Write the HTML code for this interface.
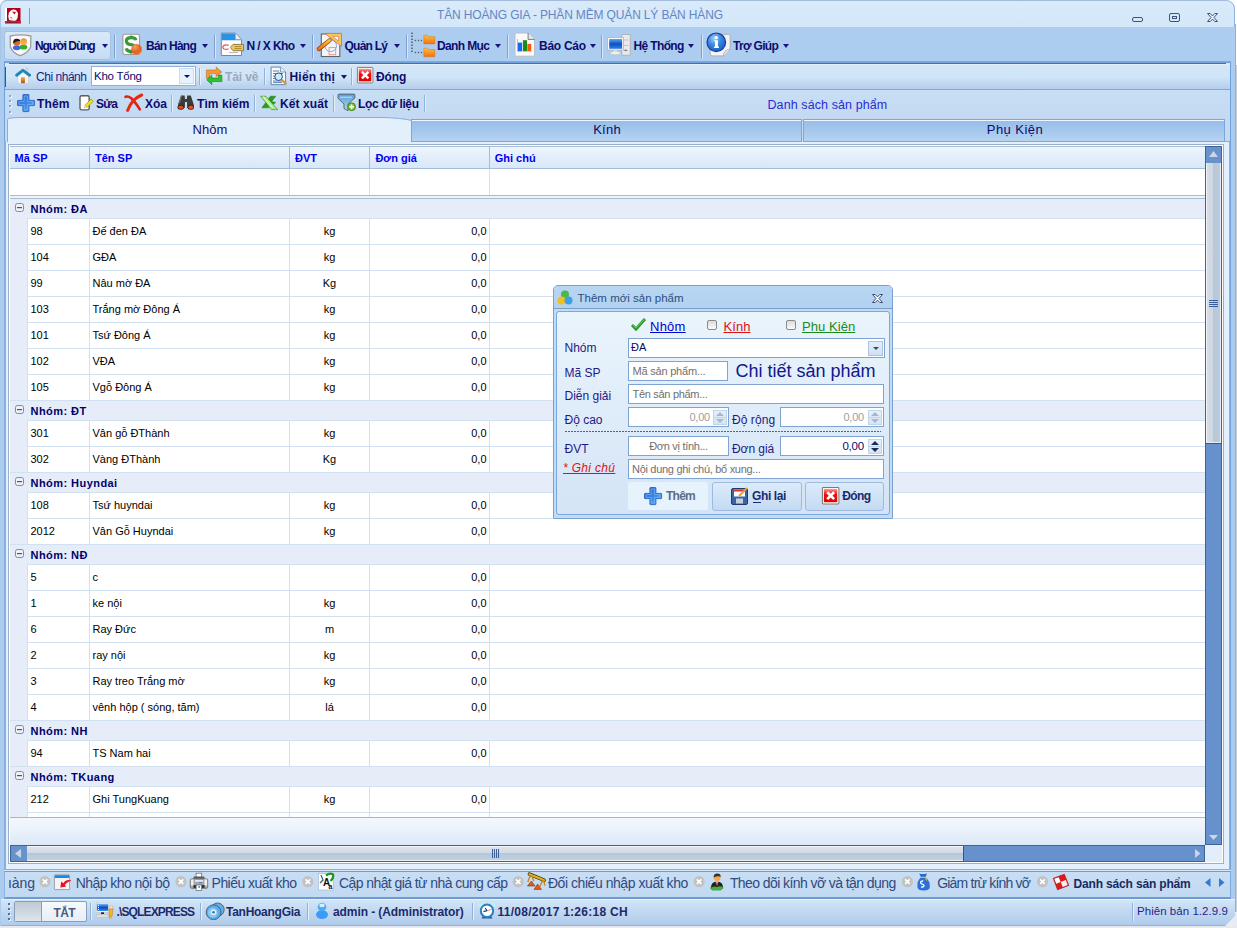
<!DOCTYPE html>
<html><head><meta charset="utf-8">
<style>
*{margin:0;padding:0;box-sizing:border-box}
html,body{width:1237px;height:928px;overflow:hidden;background:#fff;font-family:"Liberation Sans",sans-serif;position:relative}
.a{position:absolute}
.t{position:absolute;white-space:nowrap;line-height:1}
svg{overflow:visible}
.h{-webkit-text-stroke:0.2px currentColor}
</style></head><body>

<div class="a" style="left:0px;top:0px;width:1237px;height:928px;background:#ffffff"></div>
<div class="a" style="left:0px;top:0px;width:1235px;height:926px;background:#abcbef;border-radius:7px 9px 0 0"></div>
<div class="a" style="left:0px;top:0px;width:1235px;height:27px;background:linear-gradient(#d9ebfa,#d4e7f8);border-top:1px solid #a3bcdc;border-left:1px solid #a9c4e4;border-right:1px solid #92b4de;border-radius:7px 9px 0 0"></div>
<svg class="a" style="left:5px;top:8px" width="16" height="16" viewBox="0 0 16 16"><rect x="0" y="0" width="2" height="13" fill="#ffffff"/><rect x="2" y="0" width="13.5" height="13.5" fill="#b0001c"/><path d="M4 12 Q2.5 8 4 4.5 Q6 1.2 9 1.5 Q12.5 2 13 6 Q13.2 10 11 12.5 Q8 13 4 12Z" fill="#ffffff"/><path d="M7 3.5 L11 4 L9.5 6.5 Z" fill="#c01020"/><path d="M5.5 9 L7 10.5" stroke="#c01020" stroke-width="1"/><rect x="0" y="13" width="16" height="2.6" fill="#b8283a"/><rect x="2" y="14" width="11" height="0.8" fill="#7a2030"/></svg>
<div class="a" style="left:29px;top:8px;width:1px;height:16px;background:#7b9fcf"></div>
<div class="t" style="left:437px;top:9.34px;font-size:12px;color:#6585c4;letter-spacing:-0.151px;">TÂN HOÀNG GIA - PHẦN MỀM QUẢN LÝ BÁN HÀNG</div>
<div class="a" style="left:1132px;top:17px;width:11px;height:5px;border:1.5px solid #3d5183;border-radius:2px"></div>
<div class="a" style="left:1169px;top:13px;width:11px;height:9px;border:1.5px solid #3d5183;border-radius:2px"></div>
<div class="a" style="left:1172px;top:16px;width:5px;height:3px;border:1.2px solid #3d5183"></div>
<svg class="a" style="left:1207px;top:13px" width="11" height="9" viewBox="0 0 11 9"><path d="M0.5 0.5 H3.2 L5.5 2.9 L7.8 0.5 H10.5 L7 4.5 L10.5 8.5 H7.8 L5.5 6.1 L3.2 8.5 H0.5 L4 4.5 Z" fill="#e8f2fb" stroke="#3d5183" stroke-width="1" stroke-linejoin="round"/></svg>
<div class="a" style="left:0px;top:27px;width:1235px;height:35px;background:#adcdf0;border-left:1px solid #a9c4e4"></div>
<div class="a" style="left:4px;top:31px;width:107px;height:29px;background:linear-gradient(#d9e9f9,#c6dcf4);border:1px solid #a4c1e3;border-radius:3px"></div>
<svg width="0" height="0" style="position:absolute"><defs><linearGradient id="gOr" x1="0" y1="0" x2="0" y2="1"><stop offset="0" stop-color="#ffc040"/><stop offset="1" stop-color="#f07010"/></linearGradient><radialGradient id="gBall" cx="0.35" cy="0.3" r="0.8"><stop offset="0" stop-color="#f8a060"/><stop offset="0.6" stop-color="#e06020"/><stop offset="1" stop-color="#f08030"/></radialGradient><linearGradient id="gRed" x1="0" y1="0" x2="0" y2="1"><stop offset="0" stop-color="#ff9898"/><stop offset="0.4" stop-color="#f01010"/><stop offset="1" stop-color="#e00000"/></linearGradient><linearGradient id="gScr" x1="0" y1="0" x2="0" y2="1"><stop offset="0" stop-color="#60a8f0"/><stop offset="0.5" stop-color="#0850c8"/><stop offset="1" stop-color="#3080e0"/></linearGradient><radialGradient id="gInfo" cx="0.4" cy="0.3" r="0.7"><stop offset="0" stop-color="#a8d0f8"/><stop offset="0.5" stop-color="#3a88e0"/><stop offset="1" stop-color="#1a60c0"/></radialGradient><linearGradient id="gPlus" x1="0" y1="0" x2="1" y2="1"><stop offset="0" stop-color="#2a5ed0"/><stop offset="1" stop-color="#4ab0f8"/></linearGradient><linearGradient id="gFun" x1="0" y1="0" x2="0" y2="1"><stop offset="0" stop-color="#5aa0d8"/><stop offset="1" stop-color="#a8d8f8"/></linearGradient><radialGradient id="gGreen" cx="0.5" cy="0.5" r="0.5"><stop offset="0" stop-color="#c8f080"/><stop offset="1" stop-color="#50a010"/></radialGradient><linearGradient id="gDoor" x1="0" y1="0" x2="0" y2="1"><stop offset="0" stop-color="#f0b040"/><stop offset="1" stop-color="#b05010"/></linearGradient></defs></svg>
<svg class="a" style="left:6px;top:30px" width="30" height="30" viewBox="0 0 30 30"><path d="M4.2 6 Q14.5 3.8 24.9 6 L24.6 17 Q22 23 14.2 25.6 Q6.5 23 4.4 17 Z" fill="#fafafa" stroke="#9c9c9c" stroke-width="1.3"/><ellipse cx="10.8" cy="17.8" rx="3.9" ry="2.4" fill="#3a66f0"/><circle cx="10.7" cy="12.6" r="3.4" fill="#e06820"/><path d="M7.2 13.5 Q6.8 8.6 10.8 8.8 Q14 8.8 14.2 11.2 Q11 10 7.2 13.5Z" fill="#1a1a1a"/><ellipse cx="17.5" cy="17.2" rx="3.8" ry="2.4" fill="#30b030"/><circle cx="17.6" cy="11.8" r="3.4" fill="#f8a848"/><path d="M14.4 11 Q15 8 17.6 8.2 Q20.4 8.2 20.8 11 Q18 9.6 14.4 11Z" fill="#d0a050"/></svg>
<div class="t" style="left:35px;top:39.64px;font-size:12px;color:#0e0c6e;font-weight:bold;letter-spacing:-1.094px;">Người Dùng</div>
<div class="a" style="left:102px;top:44px;width:0;height:0;border-left:3.5px solid transparent;border-right:3.5px solid transparent;border-top:4px solid #18167e"></div>
<div class="a" style="left:114px;top:35px;width:1px;height:23px;background:#7f9fcc"></div>
<div class="a" style="left:115px;top:35px;width:1px;height:23px;background:#d8e8f8"></div>
<svg class="a" style="left:118px;top:30px" width="30" height="30" viewBox="0 0 30 30"><rect x="4.9" y="4.3" width="16.6" height="20.2" rx="1.8" fill="#fdfdfd" stroke="#9c9c9c" stroke-width="1.1"/><path d="M17.8 10.2 Q17.5 7.6 13.2 7.6 Q8.4 7.7 8.4 11 Q8.4 14.2 13 14.6 Q17.6 15.2 17.4 18.4 Q17 21.6 13 21.6 Q8.8 21.4 8.2 18.4" fill="none" stroke="#3a9a3a" stroke-width="3.2"/><rect x="12" y="5.6" width="2.4" height="2.5" fill="#3a9a3a"/><rect x="12" y="21" width="2.4" height="2.5" fill="#2a8a2a"/><circle cx="18.6" cy="19.4" r="5.4" fill="url(#gBall)"/></svg>
<div class="t" style="left:146px;top:39.64px;font-size:12px;color:#0e0c6e;font-weight:bold;letter-spacing:-0.745px;">Bán Hàng</div>
<div class="a" style="left:202px;top:44px;width:0;height:0;border-left:3.5px solid transparent;border-right:3.5px solid transparent;border-top:4px solid #18167e"></div>
<div class="a" style="left:214px;top:35px;width:1px;height:23px;background:#7f9fcc"></div>
<div class="a" style="left:215px;top:35px;width:1px;height:23px;background:#d8e8f8"></div>
<svg class="a" style="left:216px;top:30px" width="30" height="30" viewBox="0 0 30 30"><path d="M5.3 3.1 H19.4 L25.5 9.4 V25.5 H5.3 Z" fill="#fdfdfd" stroke="#7a8898" stroke-width="1"/><path d="M5.8 3.6 H19.2 L24.8 9.6 V10.2 H5.8 Z" fill="#2a90e8"/><path d="M19.4 3.1 V9.4 H25.5 Z" fill="#f0f0f0" stroke="#8a98a8" stroke-width="0.6"/><path d="M12.6 15.4 Q10 14.4 7.6 15.6 Q5.8 17.4 8 19 Q10.4 19.8 12.6 18.8" fill="none" stroke="#f05050" stroke-width="1.2"/><rect x="13" y="22" width="9" height="1" fill="#b8b8b8"/><path d="M14.5 17.5 L17 14.4 H27.5 V20.7 H17 Z" fill="#f0cc60" stroke="#8a7030" stroke-width="0.9"/><rect x="18.5" y="16.2" width="7" height="0.9" fill="#a08030"/><rect x="18.5" y="18.2" width="7" height="0.9" fill="#a08030"/></svg>
<div class="t" style="left:246.5px;top:39.64px;font-size:12px;color:#0e0c6e;font-weight:bold;letter-spacing:-0.605px;">N / X Kho</div>
<div class="a" style="left:300px;top:44px;width:0;height:0;border-left:3.5px solid transparent;border-right:3.5px solid transparent;border-top:4px solid #18167e"></div>
<div class="a" style="left:312px;top:35px;width:1px;height:23px;background:#7f9fcc"></div>
<div class="a" style="left:313px;top:35px;width:1px;height:23px;background:#d8e8f8"></div>
<svg class="a" style="left:316px;top:30px" width="30" height="30" viewBox="0 0 30 30"><rect x="5.3" y="4" width="18.5" height="22.5" fill="#f6f6f8" stroke="#606468" stroke-width="1.1"/><circle cx="14.7" cy="15.8" r="5.8" fill="none" stroke="#6aa0f0" stroke-width="0.9"/><rect x="13.1" y="17.6" width="6.6" height="7.1" fill="none" stroke="#e09090" stroke-width="0.9"/><path d="M8.9 3.4 H25.5 V16.5 Z" fill="#f8c858" stroke="#d07850" stroke-width="0.9"/><path d="M16.5 6.3 H22.6 V11.3 Z" fill="#f8f8f8" stroke="#d07850" stroke-width="0.7"/><path d="M2.8 19 L13.6 10.3" stroke="#a04010" stroke-width="4.2" stroke-linecap="round"/><path d="M2.8 19 L13.6 10.3" stroke="url(#gOr)" stroke-width="2.8" stroke-linecap="round"/></svg>
<div class="t" style="left:344.5px;top:39.64px;font-size:12px;color:#0e0c6e;font-weight:bold;letter-spacing:-0.753px;">Quản Lý</div>
<div class="a" style="left:394px;top:44px;width:0;height:0;border-left:3.5px solid transparent;border-right:3.5px solid transparent;border-top:4px solid #18167e"></div>
<div class="a" style="left:406px;top:35px;width:1px;height:23px;background:#7f9fcc"></div>
<div class="a" style="left:407px;top:35px;width:1px;height:23px;background:#d8e8f8"></div>
<svg class="a" style="left:408px;top:30px" width="30" height="30" viewBox="0 0 30 30"><rect x="3.2" y="2.6" width="1.6" height="1.4" fill="#5a5a5a"/><rect x="3.2" y="5.6" width="1.6" height="1.4" fill="#5a5a5a"/><rect x="3.2" y="8.6" width="1.6" height="1.4" fill="#5a5a5a"/><rect x="3.2" y="11.6" width="1.6" height="1.4" fill="#5a5a5a"/><rect x="3.2" y="14.6" width="1.6" height="1.4" fill="#5a5a5a"/><rect x="3.2" y="17.6" width="1.6" height="1.4" fill="#5a5a5a"/><rect x="3.2" y="20.6" width="1.6" height="1.4" fill="#5a5a5a"/><rect x="6.8" y="9.8" width="1.3" height="1.4" fill="#5a5a5a"/><rect x="6.8" y="21.8" width="1.3" height="1.4" fill="#5a5a5a"/><rect x="9.8" y="9.8" width="1.3" height="1.4" fill="#5a5a5a"/><rect x="9.8" y="21.8" width="1.3" height="1.4" fill="#5a5a5a"/><rect x="12.8" y="9.8" width="1.3" height="1.4" fill="#5a5a5a"/><rect x="12.8" y="21.8" width="1.3" height="1.4" fill="#5a5a5a"/><path d="M15.8 5.6 Q15.8 5.2 16.3 5.2 H19.6 L20.8 6.7 H26.8 V13.9 H15.8 Z" fill="url(#gOr)" stroke="#e07010" stroke-width="0.5"/><path d="M15.8 18.6 Q15.8 18.2 16.3 18.2 H19.6 L20.8 19.6 H26.8 V26.8 H15.8 Z" fill="url(#gOr)" stroke="#e07010" stroke-width="0.5"/></svg>
<div class="t" style="left:437px;top:39.64px;font-size:12px;color:#0e0c6e;font-weight:bold;letter-spacing:-0.621px;">Danh Mục</div>
<div class="a" style="left:495px;top:44px;width:0;height:0;border-left:3.5px solid transparent;border-right:3.5px solid transparent;border-top:4px solid #18167e"></div>
<div class="a" style="left:507px;top:35px;width:1px;height:23px;background:#7f9fcc"></div>
<div class="a" style="left:508px;top:35px;width:1px;height:23px;background:#d8e8f8"></div>
<svg class="a" style="left:510px;top:30px" width="30" height="30" viewBox="0 0 30 30"><path d="M5 3 H18.1 L24.6 9.4 V26.2 H5 Z" fill="#fafafa" stroke="#b8bcc0" stroke-width="1"/><path d="M18.1 3 V9.4 H24.6" fill="#e8e8e8" stroke="#5a6068" stroke-width="0.8"/><rect x="7.2" y="9" width="0.6" height="12.7" fill="#999"/><rect x="7.2" y="21.4" width="14.8" height="0.6" fill="#bbb"/><rect x="7.9" y="12.6" width="4.2" height="8.5" fill="#1a66f0"/><rect x="12.9" y="10.2" width="4.1" height="10.9" fill="#1a8a1a"/><rect x="17.3" y="13.9" width="3.9" height="7.2" fill="#f85a10"/></svg>
<div class="t" style="left:539px;top:39.64px;font-size:12px;color:#0e0c6e;font-weight:bold;letter-spacing:-0.281px;">Báo Cáo</div>
<div class="a" style="left:590px;top:44px;width:0;height:0;border-left:3.5px solid transparent;border-right:3.5px solid transparent;border-top:4px solid #18167e"></div>
<div class="a" style="left:601px;top:35px;width:1px;height:23px;background:#7f9fcc"></div>
<div class="a" style="left:602px;top:35px;width:1px;height:23px;background:#d8e8f8"></div>
<svg class="a" style="left:604px;top:30px" width="30" height="30" viewBox="0 0 30 30"><rect x="17.9" y="4.5" width="8.3" height="20.7" fill="#eaeaea" stroke="#a8acb0" stroke-width="0.8"/><rect x="19.5" y="9.6" width="5.2" height="0.8" fill="#bbb"/><rect x="19.5" y="15" width="5.2" height="0.8" fill="#bbb"/><ellipse cx="21.8" cy="20.3" rx="1.8" ry="0.9" fill="#888"/><rect x="3.6" y="7.6" width="15.8" height="12.4" fill="#f8f8f8" stroke="#b0b4b8" stroke-width="0.8"/><rect x="5.2" y="9" width="12.9" height="9.8" fill="url(#gScr)"/><ellipse cx="11.3" cy="23" rx="5.6" ry="1.7" fill="#f0f0f0" stroke="#b8bcc0" stroke-width="0.7"/><rect x="9.5" y="20" width="3.6" height="2" fill="#ddd"/></svg>
<div class="t" style="left:633.5px;top:39.64px;font-size:12px;color:#0e0c6e;font-weight:bold;letter-spacing:-0.633px;">Hệ Thống</div>
<div class="a" style="left:688px;top:44px;width:0;height:0;border-left:3.5px solid transparent;border-right:3.5px solid transparent;border-top:4px solid #18167e"></div>
<div class="a" style="left:701px;top:35px;width:1px;height:23px;background:#7f9fcc"></div>
<div class="a" style="left:702px;top:35px;width:1px;height:23px;background:#d8e8f8"></div>
<svg class="a" style="left:703px;top:30px" width="30" height="30" viewBox="0 0 30 30"><path d="M7.2 4.3 H25.5 Q27.2 4.5 27.2 6.5 V19 L20.5 25.9 H9 Q7.2 25.7 7.2 24 Z" fill="#f4f4f4" stroke="#a8a8a8" stroke-width="0.9"/><path d="M20.5 25.9 Q20 20 27.2 19" fill="#e0e0e0" stroke="#a8a8a8" stroke-width="0.7"/><circle cx="13.3" cy="12.3" r="9.3" fill="url(#gInfo)" stroke="#1a3aa8" stroke-width="1.2"/><circle cx="13.3" cy="7.6" r="1.7" fill="#fff"/><path d="M11.3 10.2 H14.9 V16.6 H16 V17.9 H10.9 V16.6 H12 V11.4 H11.3 Z" fill="#fff"/></svg>
<div class="t" style="left:733px;top:39.64px;font-size:12px;color:#0e0c6e;font-weight:bold;letter-spacing:-0.676px;">Trợ Giúp</div>
<div class="a" style="left:783px;top:44px;width:0;height:0;border-left:3.5px solid transparent;border-right:3.5px solid transparent;border-top:4px solid #18167e"></div>
<div class="a" style="left:4px;top:61px;width:1227px;height:1px;background:#90a6be"></div>
<div class="a" style="left:4px;top:62px;width:1227px;height:1px;background:#72a0d8"></div>
<div class="a" style="left:0px;top:62px;width:4px;height:864px;background:#abcbef"></div>
<div class="a" style="left:1231px;top:62px;width:4px;height:864px;background:#abcbef"></div>
<div class="a" style="left:1230px;top:62px;width:1px;height:835px;background:#72a0d8"></div>
<div class="a" style="left:4px;top:62px;width:1px;height:835px;background:#72a0d8"></div>
<div class="a" style="left:1235px;top:24px;width:1px;height:902px;background:#8fb0d8"></div>
<div class="a" style="left:1236px;top:65px;width:1px;height:861px;background:#c8d0da"></div>
<div class="a" style="left:5px;top:63px;width:1225px;height:26px;background:linear-gradient(#d4e7fa,#d0e4f8 55%,#b4ceec)"></div>
<div class="a" style="left:9px;top:63px;width:1217px;height:1px;background:#606c7c"></div>
<div class="a" style="left:5px;top:64px;width:1225px;height:1px;background:#e2eefb"></div>
<div class="a" style="left:5px;top:67px;width:1px;height:20px;background:#4a5568"></div>
<svg class="a" style="left:12px;top:64px" width="24" height="24" viewBox="0 0 24 24"><rect x="14" y="4.1" width="1.8" height="3.6" fill="#f4e8e8" stroke="#b8b0b0" stroke-width="0.5"/><path d="M5.7 10.5 L10.9 7 L16.6 10.5 V19.4 H5.7 Z" fill="#f4f4f4" stroke="#c8c8cc" stroke-width="0.7"/><rect x="9" y="13.2" width="3.9" height="6" fill="url(#gDoor)"/><path d="M4.6 11.2 L10.9 6.4 L17.6 11.2" stroke="#1e88b8" stroke-width="3" fill="none" stroke-linecap="round" stroke-linejoin="round"/></svg>
<div class="t" style="left:36px;top:70.84px;font-size:12px;color:#1a1a8a;letter-spacing:-0.465px;">Chi nhánh</div>
<div class="a" style="left:91px;top:66px;width:105px;height:20px;background:#fff;border:1px solid #8fb0d8"></div>
<div class="a" style="left:179px;top:68px;width:15px;height:16px;background:#e6f2fd;border:1px solid #c8dcf0"></div>
<div class="a" style="left:183.5px;top:75px;width:0;height:0;border-left:3.0px solid transparent;border-right:3.0px solid transparent;border-top:3.5px solid #0e0c6e"></div>
<div class="t" style="left:94px;top:70.77px;font-size:11.5px;color:#0a0a6a;letter-spacing:-0.239px;">Kho Tổng</div>
<div class="a" style="left:199px;top:68px;width:1px;height:17px;background:#8fb1da"></div>
<div class="a" style="left:200px;top:68px;width:1px;height:17px;background:#e4f0fb"></div>
<svg class="a" style="left:202px;top:64px" width="24" height="24" viewBox="0 0 24 24"><path d="M4.4 14.2 V6 H14.2 V3.1 L19.7 8 L14.2 12.7 V9.6 H7.5 V14.2 Z" fill="#f49a30" stroke="#c06828" stroke-width="0.6"/><path d="M19.9 11.1 V17.6 H9.8 V20.7 L4.7 15.8 L9.8 10.9 V14 H16.5 V11.1 Z" fill="#30c030" stroke="#1a8020" stroke-width="0.6"/></svg>
<div class="t" style="left:225px;top:70.84px;font-size:12px;color:#9aa8bc;font-weight:bold;letter-spacing:-0.106px;">Tải về</div>
<div class="a" style="left:264px;top:68px;width:1px;height:17px;background:#8fb1da"></div>
<div class="a" style="left:265px;top:68px;width:1px;height:17px;background:#e4f0fb"></div>
<svg class="a" style="left:267px;top:64px" width="24" height="24" viewBox="0 0 24 24"><path d="M4.1 3.1 H13.4 L18.6 8 V20.7 H4.1 Z" fill="#fafcfe" stroke="#5a88a8" stroke-width="1"/><path d="M13.4 3.1 V8 H18.6" fill="#e8f0f8" stroke="#5a88a8" stroke-width="0.8"/><path d="M6 7 H12 M6 9.5 H16 M6 12 H8 M6 14.5 H8 M6 17 H16 M6 18.6 H15" stroke="#5070b0" stroke-width="0.9"/><circle cx="11.6" cy="12.7" r="3.8" fill="#c8ecf8" stroke="#2a4a80" stroke-width="1"/><path d="M15.2 16.2 L18.8 19.6" stroke="#e89020" stroke-width="2.2" stroke-linecap="round"/></svg>
<div class="t" style="left:289.5px;top:70.84px;font-size:12px;color:#0e0c6e;font-weight:bold;letter-spacing:0.200px;">Hiển thị</div>
<div class="a" style="left:341px;top:75px;width:0;height:0;border-left:3.5px solid transparent;border-right:3.5px solid transparent;border-top:4px solid #18167e"></div>
<div class="a" style="left:351px;top:68px;width:1px;height:17px;background:#8fb1da"></div>
<div class="a" style="left:352px;top:68px;width:1px;height:17px;background:#e4f0fb"></div>
<svg class="a" style="left:357px;top:67px" width="17" height="17" viewBox="0 0 17 17"><g transform="scale(0.982)"><rect x="0.4" y="0.4" width="15.8" height="15.8" rx="0.8" fill="#fff" stroke="#7a7a7a" stroke-width="1"/><rect x="1.8" y="1.8" width="12.8" height="12.8" fill="url(#gRed)"/><path d="M5 5 L11.6 11.6 M11.6 5 L5 11.6" stroke="#fff" stroke-width="2.6"/></g></svg>
<div class="t" style="left:376px;top:70.84px;font-size:12px;color:#0e0c6e;font-weight:bold;letter-spacing:-0.100px;">Đóng</div>
<div class="a" style="left:5px;top:89px;width:1225px;height:28px;background:linear-gradient(#c8def4,#c3daf2);border-top:1px solid #80a8d8"></div>
<div class="a" style="left:9px;top:95px;width:2px;height:2px;background:#8aa4c8;box-shadow:1px 1px 0 #eef5fc"></div>
<div class="a" style="left:9px;top:100px;width:2px;height:2px;background:#8aa4c8;box-shadow:1px 1px 0 #eef5fc"></div>
<div class="a" style="left:9px;top:105px;width:2px;height:2px;background:#8aa4c8;box-shadow:1px 1px 0 #eef5fc"></div>
<div class="a" style="left:9px;top:111px;width:2px;height:2px;background:#8aa4c8;box-shadow:1px 1px 0 #eef5fc"></div>
<svg class="a" style="left:17px;top:94px" width="18" height="18" viewBox="0 0 18 18"><path d="M6.4 0.5 H11.4 Q11.9 0.5 11.9 1 V6.4 H17.1 Q17.6 6.4 17.6 6.9 V11.1 Q17.6 11.6 17.1 11.6 H11.9 V17.1 Q11.9 17.6 11.4 17.6 H6.4 Q5.9 17.6 5.9 17.1 V11.6 H1 Q0.5 11.6 0.5 11.1 V6.9 Q0.5 6.4 1 6.4 H5.9 V1 Q5.9 0.5 6.4 0.5 Z" fill="url(#gPlus)" stroke="#2a62c8" stroke-width="0.9"/><path d="M7.2 2 H10.6 V7.6 H16 V10.4 H10.6 V16 H7.2 V10.4 H2 V7.6 H7.2 Z" fill="none" stroke="#8cc4f8" stroke-width="0.7" opacity="0.8"/></svg>
<div class="t" style="left:37px;top:97.84px;font-size:12px;color:#0e0c6e;font-weight:bold;letter-spacing:0.161px;">Thêm</div>
<svg class="a" style="left:76px;top:91px" width="24" height="24" viewBox="0 0 24 24"><rect x="4" y="4.7" width="9.2" height="14.2" rx="1.6" fill="#fff" stroke="#5a5e5e" stroke-width="1.4"/><path d="M8.8 14.5 L15 8 L17.3 10.2 L11 16.6 Z" fill="#f8e010" stroke="#6a6a10" stroke-width="0.5"/><path d="M8.8 14.5 L8 16.8 L11 16.6 Z" fill="#e8e0c0"/><path d="M8.1 16 L8 16.8 L8.9 16.6Z" fill="#333"/></svg>
<div class="t" style="left:96px;top:97.84px;font-size:12px;color:#0e0c6e;font-weight:bold;letter-spacing:-0.688px;">Sửa</div>
<svg class="a" style="left:122px;top:91px" width="24" height="24" viewBox="0 0 24 24"><path d="M3.6 5.8 Q6 5 9 7 Q13 10.5 17.8 18.4" stroke="#e02010" stroke-width="2.6" fill="none" stroke-linecap="round"/><path d="M19.7 4 Q15 6 11.5 9.5 Q7.5 14 5.6 19.4" stroke="#e82810" stroke-width="3" fill="none" stroke-linecap="round"/></svg>
<div class="t" style="left:145px;top:97.84px;font-size:12px;color:#0e0c6e;font-weight:bold;letter-spacing:-0.008px;">Xóa</div>
<div class="a" style="left:171px;top:95px;width:1px;height:17px;background:#8fb1da"></div>
<div class="a" style="left:172px;top:95px;width:1px;height:17px;background:#e4f0fb"></div>
<svg class="a" style="left:174px;top:91px" width="24" height="24" viewBox="0 0 24 24"><path d="M7 4.6 H10.6 L11 8 H12.8 L13.2 4.6 H16.8 L19.6 13 L20 17 H13.2 L13 11 H11 L10.8 17 H3.8 L4.2 13 Z" fill="#3c3c3c"/><path d="M7.4 5 L5.5 12" stroke="#8a8a8a" stroke-width="0.8"/><ellipse cx="6.8" cy="16.2" rx="3.2" ry="2.5" fill="#1a1a1a"/><ellipse cx="6.8" cy="16.2" rx="2.5" ry="1.8" fill="#f04818"/><ellipse cx="16.8" cy="16.2" rx="3.2" ry="2.5" fill="#1a1a1a"/><ellipse cx="16.8" cy="16.2" rx="2.5" ry="1.8" fill="#f05020"/></svg>
<div class="t" style="left:197px;top:97.84px;font-size:12px;color:#0e0c6e;font-weight:bold;letter-spacing:0.067px;">Tìm kiếm</div>
<div class="a" style="left:254px;top:95px;width:1px;height:17px;background:#8fb1da"></div>
<div class="a" style="left:255px;top:95px;width:1px;height:17px;background:#e4f0fb"></div>
<svg class="a" style="left:258px;top:91px" width="24" height="24" viewBox="0 0 24 24"><path d="M12.4 5.2 H17.8 L13.6 10.6 L17.8 11.4 L15 13.6 L10.3 16.8 H3.9 Z" fill="#2a9a20" stroke="#1a7a10" stroke-width="0.5"/><path d="M2.6 5.2 H7.8 L19.7 18.6 H13.4 Z" fill="#a8e880" stroke="#2a8a20" stroke-width="0.6"/><path d="M5 5.6 L15 16.8" stroke="#e8ffe0" stroke-width="1.2" opacity="0.8"/></svg>
<div class="t" style="left:280px;top:97.84px;font-size:12px;color:#0e0c6e;font-weight:bold;letter-spacing:0.094px;">Kết xuất</div>
<div class="a" style="left:333px;top:95px;width:1px;height:17px;background:#8fb1da"></div>
<div class="a" style="left:334px;top:95px;width:1px;height:17px;background:#e4f0fb"></div>
<svg class="a" style="left:335px;top:91px" width="24" height="24" viewBox="0 0 24 24"><path d="M3.1 4 Q3.1 3.1 4 3.1 H19 Q19.9 3.1 19.9 4 V7 L13 13 V19.7 L9 17.5 V13 L3.1 7.5 Z" fill="url(#gFun)" stroke="#58606a" stroke-width="0.9"/><path d="M5 6.2 H17" stroke="#d8f0ff" stroke-width="0.8"/><circle cx="16.6" cy="15.8" r="4" fill="url(#gGreen)" stroke="#3a8a10" stroke-width="0.6"/><path d="M16.6 13.4 V18.2 M14.2 15.8 H19" stroke="#fff" stroke-width="1.4"/></svg>
<div class="t" style="left:358px;top:97.84px;font-size:12px;color:#0e0c6e;font-weight:bold;letter-spacing:-0.370px;">Lọc dữ liệu</div>
<div class="a" style="left:424px;top:95px;width:1px;height:17px;background:#8fb1da"></div>
<div class="a" style="left:425px;top:95px;width:1px;height:17px;background:#e4f0fb"></div>
<div class="t" style="left:767.5px;top:99.02px;font-size:12.5px;color:#2b2bd6;letter-spacing:0.092px;">Danh sách sản phẩm</div>
<div class="a" style="left:5px;top:117px;width:1225px;height:24px;background:#c3daf2"></div>
<div class="a" style="left:4px;top:141px;width:1226px;height:729px;background:#e4f0fc;border-left:2px solid #86aede;border-right:1px solid #8eb3e0"></div>
<svg class="a" style="left:7px;top:116px" width="406" height="27" viewBox="0 0 406 27"><path d="M0.5 26 V3.5 Q0.5 2.5 3 2.2 Q7 1.6 14 1.5 L375 1.5 Q395 2 404.5 4.5 V26 Z" fill="#e3effb" stroke="#86aee0" stroke-width="1"/><rect x="1" y="25" width="403" height="2" fill="#e3effb"/></svg>
<div class="t" style="left:-90px;width:600px;text-align:center;top:123.40px;font-size:13px;color:#0c0c6c;letter-spacing:0.104px;">Nhôm</div>
<div class="a" style="left:411px;top:119px;width:391px;height:23px;background:linear-gradient(#95bce8,#b6d3f1);border:1px solid #7ca7dc;border-top:1px solid #7ca7dc;box-shadow:inset 0 1px 0 #f0f6fc"></div>
<div class="t" style="left:307px;width:600px;text-align:center;top:123.40px;font-size:13px;color:#0c0c6c;letter-spacing:0.250px;">Kính</div>
<div class="a" style="left:803px;top:119px;width:422px;height:23px;background:linear-gradient(#95bce8,#b6d3f1);border:1px solid #7ca7dc;box-shadow:inset 0 1px 0 #f0f6fc"></div>
<div class="a" style="left:1225px;top:141px;width:5px;height:1px;background:#86aee0"></div>
<div class="t" style="left:715px;width:600px;text-align:center;top:123.40px;font-size:13px;color:#0c0c6c;letter-spacing:0.448px;">Phụ Kiện</div>
<div class="a" style="left:8px;top:144px;width:1216px;height:720px;background:#fff;border:1px solid #9bb0c8"></div>
<div class="a" style="left:10px;top:146px;width:1195px;height:23px;background:linear-gradient(#eef5fd,#d8e7f8);border-top:1px solid #a4bcd8;border-bottom:1px solid #a4bcd8"></div>
<div class="a" style="left:89px;top:147px;width:1px;height:21px;background:#a4bcd8"></div>
<div class="a" style="left:289px;top:147px;width:1px;height:21px;background:#a4bcd8"></div>
<div class="a" style="left:369px;top:147px;width:1px;height:21px;background:#a4bcd8"></div>
<div class="a" style="left:489px;top:147px;width:1px;height:21px;background:#a4bcd8"></div>
<div class="t" style="left:14.5px;top:153.29px;font-size:11px;color:#0000f0;font-weight:bold;">Mã SP</div>
<div class="t" style="left:95px;top:153.29px;font-size:11px;color:#0000f0;font-weight:bold;">Tên SP</div>
<div class="t" style="left:295px;top:153.29px;font-size:11px;color:#0000f0;font-weight:bold;">ĐVT</div>
<div class="t" style="left:375.4px;top:153.29px;font-size:11px;color:#0000f0;font-weight:bold;">Đơn giá</div>
<div class="t" style="left:494.7px;top:153.29px;font-size:11px;color:#0000f0;font-weight:bold;">Ghi chú</div>
<div class="a" style="left:89px;top:169px;width:1px;height:26px;background:#d2e1f1"></div>
<div class="a" style="left:289px;top:169px;width:1px;height:26px;background:#d2e1f1"></div>
<div class="a" style="left:369px;top:169px;width:1px;height:26px;background:#d2e1f1"></div>
<div class="a" style="left:489px;top:169px;width:1px;height:26px;background:#d2e1f1"></div>
<div class="a" style="left:10px;top:195px;width:1195px;height:1px;background:#a6bcd6"></div>
<div class="a" style="left:10px;top:196px;width:1195px;height:2px;background:#eef4fa"></div>
<div class="a" style="left:10px;top:198px;width:1195px;height:1px;background:#a6bcd6"></div>
<div class="a" style="left:10px;top:199px;width:17px;height:619px;background:#e6edf8"></div>
<div class="a" style="left:10px;top:199px;width:1195px;height:19px;background:#e6edf8"></div>
<svg class="a" style="left:15px;top:203px" width="9" height="9" viewBox="0 0 9 9"><rect x="0.5" y="0.5" width="8" height="8" rx="2" fill="#eef1f6" stroke="#7d8aa0"/><rect x="2" y="4" width="5" height="1.2" fill="#4a5670"/></svg>
<div class="t" style="left:30.5px;top:203.69px;font-size:11px;color:#00006e;font-weight:bold;letter-spacing:0.450px;">Nhóm: ĐA</div>
<div class="a" style="left:27px;top:218px;width:1178px;height:26px;background:#fff;border-top:1px solid #d2e1f1;border-left:1px solid #d2e1f1"></div>
<div class="a" style="left:89px;top:218px;width:1px;height:26px;background:#d2e1f1"></div>
<div class="a" style="left:289px;top:218px;width:1px;height:26px;background:#d2e1f1"></div>
<div class="a" style="left:369px;top:218px;width:1px;height:26px;background:#d2e1f1"></div>
<div class="a" style="left:489px;top:218px;width:1px;height:26px;background:#d2e1f1"></div>
<div class="t" style="left:30.5px;top:226.39px;font-size:11px;color:#000;">98</div>
<div class="t" style="left:92.5px;top:226.39px;font-size:11px;color:#000;">Đế đen ĐA</div>
<div class="t" style="left:29.5px;width:600px;text-align:center;top:226.39px;font-size:11px;color:#000;">kg</div>
<div class="t" style="right:750.5px;top:226.39px;font-size:11px;color:#000;">0,0</div>
<div class="a" style="left:27px;top:244px;width:1178px;height:26px;background:#fff;border-top:1px solid #d2e1f1;border-left:1px solid #d2e1f1"></div>
<div class="a" style="left:89px;top:244px;width:1px;height:26px;background:#d2e1f1"></div>
<div class="a" style="left:289px;top:244px;width:1px;height:26px;background:#d2e1f1"></div>
<div class="a" style="left:369px;top:244px;width:1px;height:26px;background:#d2e1f1"></div>
<div class="a" style="left:489px;top:244px;width:1px;height:26px;background:#d2e1f1"></div>
<div class="t" style="left:30.5px;top:252.39px;font-size:11px;color:#000;">104</div>
<div class="t" style="left:92.5px;top:252.39px;font-size:11px;color:#000;">GĐA</div>
<div class="t" style="left:29.5px;width:600px;text-align:center;top:252.39px;font-size:11px;color:#000;">kg</div>
<div class="t" style="right:750.5px;top:252.39px;font-size:11px;color:#000;">0,0</div>
<div class="a" style="left:27px;top:270px;width:1178px;height:26px;background:#fff;border-top:1px solid #d2e1f1;border-left:1px solid #d2e1f1"></div>
<div class="a" style="left:89px;top:270px;width:1px;height:26px;background:#d2e1f1"></div>
<div class="a" style="left:289px;top:270px;width:1px;height:26px;background:#d2e1f1"></div>
<div class="a" style="left:369px;top:270px;width:1px;height:26px;background:#d2e1f1"></div>
<div class="a" style="left:489px;top:270px;width:1px;height:26px;background:#d2e1f1"></div>
<div class="t" style="left:30.5px;top:278.39px;font-size:11px;color:#000;">99</div>
<div class="t" style="left:92.5px;top:278.39px;font-size:11px;color:#000;">Nâu mờ ĐA</div>
<div class="t" style="left:29.5px;width:600px;text-align:center;top:278.39px;font-size:11px;color:#000;">Kg</div>
<div class="t" style="right:750.5px;top:278.39px;font-size:11px;color:#000;">0,0</div>
<div class="a" style="left:27px;top:296px;width:1178px;height:26px;background:#fff;border-top:1px solid #d2e1f1;border-left:1px solid #d2e1f1"></div>
<div class="a" style="left:89px;top:296px;width:1px;height:26px;background:#d2e1f1"></div>
<div class="a" style="left:289px;top:296px;width:1px;height:26px;background:#d2e1f1"></div>
<div class="a" style="left:369px;top:296px;width:1px;height:26px;background:#d2e1f1"></div>
<div class="a" style="left:489px;top:296px;width:1px;height:26px;background:#d2e1f1"></div>
<div class="t" style="left:30.5px;top:304.39px;font-size:11px;color:#000;">103</div>
<div class="t" style="left:92.5px;top:304.39px;font-size:11px;color:#000;">Trắng mờ Đông Á</div>
<div class="t" style="left:29.5px;width:600px;text-align:center;top:304.39px;font-size:11px;color:#000;">kg</div>
<div class="t" style="right:750.5px;top:304.39px;font-size:11px;color:#000;">0,0</div>
<div class="a" style="left:27px;top:322px;width:1178px;height:26px;background:#fff;border-top:1px solid #d2e1f1;border-left:1px solid #d2e1f1"></div>
<div class="a" style="left:89px;top:322px;width:1px;height:26px;background:#d2e1f1"></div>
<div class="a" style="left:289px;top:322px;width:1px;height:26px;background:#d2e1f1"></div>
<div class="a" style="left:369px;top:322px;width:1px;height:26px;background:#d2e1f1"></div>
<div class="a" style="left:489px;top:322px;width:1px;height:26px;background:#d2e1f1"></div>
<div class="t" style="left:30.5px;top:330.39px;font-size:11px;color:#000;">101</div>
<div class="t" style="left:92.5px;top:330.39px;font-size:11px;color:#000;">Tsứ Đông Á</div>
<div class="t" style="left:29.5px;width:600px;text-align:center;top:330.39px;font-size:11px;color:#000;">kg</div>
<div class="t" style="right:750.5px;top:330.39px;font-size:11px;color:#000;">0,0</div>
<div class="a" style="left:27px;top:348px;width:1178px;height:26px;background:#fff;border-top:1px solid #d2e1f1;border-left:1px solid #d2e1f1"></div>
<div class="a" style="left:89px;top:348px;width:1px;height:26px;background:#d2e1f1"></div>
<div class="a" style="left:289px;top:348px;width:1px;height:26px;background:#d2e1f1"></div>
<div class="a" style="left:369px;top:348px;width:1px;height:26px;background:#d2e1f1"></div>
<div class="a" style="left:489px;top:348px;width:1px;height:26px;background:#d2e1f1"></div>
<div class="t" style="left:30.5px;top:356.39px;font-size:11px;color:#000;">102</div>
<div class="t" style="left:92.5px;top:356.39px;font-size:11px;color:#000;">VĐA</div>
<div class="t" style="left:29.5px;width:600px;text-align:center;top:356.39px;font-size:11px;color:#000;">kg</div>
<div class="t" style="right:750.5px;top:356.39px;font-size:11px;color:#000;">0,0</div>
<div class="a" style="left:27px;top:374px;width:1178px;height:26px;background:#fff;border-top:1px solid #d2e1f1;border-left:1px solid #d2e1f1"></div>
<div class="a" style="left:89px;top:374px;width:1px;height:26px;background:#d2e1f1"></div>
<div class="a" style="left:289px;top:374px;width:1px;height:26px;background:#d2e1f1"></div>
<div class="a" style="left:369px;top:374px;width:1px;height:26px;background:#d2e1f1"></div>
<div class="a" style="left:489px;top:374px;width:1px;height:26px;background:#d2e1f1"></div>
<div class="t" style="left:30.5px;top:382.39px;font-size:11px;color:#000;">105</div>
<div class="t" style="left:92.5px;top:382.39px;font-size:11px;color:#000;">Vgỗ Đông Á</div>
<div class="t" style="left:29.5px;width:600px;text-align:center;top:382.39px;font-size:11px;color:#000;">kg</div>
<div class="t" style="right:750.5px;top:382.39px;font-size:11px;color:#000;">0,0</div>
<div class="a" style="left:10px;top:401px;width:1195px;height:19px;background:#e6edf8"></div>
<div class="a" style="left:10px;top:400px;width:1195px;height:1px;background:#d2e1f1"></div>
<svg class="a" style="left:15px;top:405px" width="9" height="9" viewBox="0 0 9 9"><rect x="0.5" y="0.5" width="8" height="8" rx="2" fill="#eef1f6" stroke="#7d8aa0"/><rect x="2" y="4" width="5" height="1.2" fill="#4a5670"/></svg>
<div class="t" style="left:30.5px;top:405.69px;font-size:11px;color:#00006e;font-weight:bold;letter-spacing:0.450px;">Nhóm: ĐT</div>
<div class="a" style="left:27px;top:420px;width:1178px;height:26px;background:#fff;border-top:1px solid #d2e1f1;border-left:1px solid #d2e1f1"></div>
<div class="a" style="left:89px;top:420px;width:1px;height:26px;background:#d2e1f1"></div>
<div class="a" style="left:289px;top:420px;width:1px;height:26px;background:#d2e1f1"></div>
<div class="a" style="left:369px;top:420px;width:1px;height:26px;background:#d2e1f1"></div>
<div class="a" style="left:489px;top:420px;width:1px;height:26px;background:#d2e1f1"></div>
<div class="t" style="left:30.5px;top:428.39px;font-size:11px;color:#000;">301</div>
<div class="t" style="left:92.5px;top:428.39px;font-size:11px;color:#000;">Vân gỗ ĐThành</div>
<div class="t" style="left:29.5px;width:600px;text-align:center;top:428.39px;font-size:11px;color:#000;">kg</div>
<div class="t" style="right:750.5px;top:428.39px;font-size:11px;color:#000;">0,0</div>
<div class="a" style="left:27px;top:446px;width:1178px;height:26px;background:#fff;border-top:1px solid #d2e1f1;border-left:1px solid #d2e1f1"></div>
<div class="a" style="left:89px;top:446px;width:1px;height:26px;background:#d2e1f1"></div>
<div class="a" style="left:289px;top:446px;width:1px;height:26px;background:#d2e1f1"></div>
<div class="a" style="left:369px;top:446px;width:1px;height:26px;background:#d2e1f1"></div>
<div class="a" style="left:489px;top:446px;width:1px;height:26px;background:#d2e1f1"></div>
<div class="t" style="left:30.5px;top:454.39px;font-size:11px;color:#000;">302</div>
<div class="t" style="left:92.5px;top:454.39px;font-size:11px;color:#000;">Vàng ĐThành</div>
<div class="t" style="left:29.5px;width:600px;text-align:center;top:454.39px;font-size:11px;color:#000;">Kg</div>
<div class="t" style="right:750.5px;top:454.39px;font-size:11px;color:#000;">0,0</div>
<div class="a" style="left:10px;top:473px;width:1195px;height:19px;background:#e6edf8"></div>
<div class="a" style="left:10px;top:472px;width:1195px;height:1px;background:#d2e1f1"></div>
<svg class="a" style="left:15px;top:477px" width="9" height="9" viewBox="0 0 9 9"><rect x="0.5" y="0.5" width="8" height="8" rx="2" fill="#eef1f6" stroke="#7d8aa0"/><rect x="2" y="4" width="5" height="1.2" fill="#4a5670"/></svg>
<div class="t" style="left:30.5px;top:477.69px;font-size:11px;color:#00006e;font-weight:bold;letter-spacing:0.450px;">Nhóm: Huyndai</div>
<div class="a" style="left:27px;top:492px;width:1178px;height:26px;background:#fff;border-top:1px solid #d2e1f1;border-left:1px solid #d2e1f1"></div>
<div class="a" style="left:89px;top:492px;width:1px;height:26px;background:#d2e1f1"></div>
<div class="a" style="left:289px;top:492px;width:1px;height:26px;background:#d2e1f1"></div>
<div class="a" style="left:369px;top:492px;width:1px;height:26px;background:#d2e1f1"></div>
<div class="a" style="left:489px;top:492px;width:1px;height:26px;background:#d2e1f1"></div>
<div class="t" style="left:30.5px;top:500.39px;font-size:11px;color:#000;">108</div>
<div class="t" style="left:92.5px;top:500.39px;font-size:11px;color:#000;">Tsứ huyndai</div>
<div class="t" style="left:29.5px;width:600px;text-align:center;top:500.39px;font-size:11px;color:#000;">kg</div>
<div class="t" style="right:750.5px;top:500.39px;font-size:11px;color:#000;">0,0</div>
<div class="a" style="left:27px;top:518px;width:1178px;height:26px;background:#fff;border-top:1px solid #d2e1f1;border-left:1px solid #d2e1f1"></div>
<div class="a" style="left:89px;top:518px;width:1px;height:26px;background:#d2e1f1"></div>
<div class="a" style="left:289px;top:518px;width:1px;height:26px;background:#d2e1f1"></div>
<div class="a" style="left:369px;top:518px;width:1px;height:26px;background:#d2e1f1"></div>
<div class="a" style="left:489px;top:518px;width:1px;height:26px;background:#d2e1f1"></div>
<div class="t" style="left:30.5px;top:526.39px;font-size:11px;color:#000;">2012</div>
<div class="t" style="left:92.5px;top:526.39px;font-size:11px;color:#000;">Vân Gỗ Huyndai</div>
<div class="t" style="left:29.5px;width:600px;text-align:center;top:526.39px;font-size:11px;color:#000;">kg</div>
<div class="t" style="right:750.5px;top:526.39px;font-size:11px;color:#000;">0,0</div>
<div class="a" style="left:10px;top:545px;width:1195px;height:19px;background:#e6edf8"></div>
<div class="a" style="left:10px;top:544px;width:1195px;height:1px;background:#d2e1f1"></div>
<svg class="a" style="left:15px;top:549px" width="9" height="9" viewBox="0 0 9 9"><rect x="0.5" y="0.5" width="8" height="8" rx="2" fill="#eef1f6" stroke="#7d8aa0"/><rect x="2" y="4" width="5" height="1.2" fill="#4a5670"/></svg>
<div class="t" style="left:30.5px;top:549.69px;font-size:11px;color:#00006e;font-weight:bold;letter-spacing:0.450px;">Nhóm: NĐ</div>
<div class="a" style="left:27px;top:564px;width:1178px;height:26px;background:#fff;border-top:1px solid #d2e1f1;border-left:1px solid #d2e1f1"></div>
<div class="a" style="left:89px;top:564px;width:1px;height:26px;background:#d2e1f1"></div>
<div class="a" style="left:289px;top:564px;width:1px;height:26px;background:#d2e1f1"></div>
<div class="a" style="left:369px;top:564px;width:1px;height:26px;background:#d2e1f1"></div>
<div class="a" style="left:489px;top:564px;width:1px;height:26px;background:#d2e1f1"></div>
<div class="t" style="left:30.5px;top:572.39px;font-size:11px;color:#000;">5</div>
<div class="t" style="left:92.5px;top:572.39px;font-size:11px;color:#000;">c</div>
<div class="t" style="right:750.5px;top:572.39px;font-size:11px;color:#000;">0,0</div>
<div class="a" style="left:27px;top:590px;width:1178px;height:26px;background:#fff;border-top:1px solid #d2e1f1;border-left:1px solid #d2e1f1"></div>
<div class="a" style="left:89px;top:590px;width:1px;height:26px;background:#d2e1f1"></div>
<div class="a" style="left:289px;top:590px;width:1px;height:26px;background:#d2e1f1"></div>
<div class="a" style="left:369px;top:590px;width:1px;height:26px;background:#d2e1f1"></div>
<div class="a" style="left:489px;top:590px;width:1px;height:26px;background:#d2e1f1"></div>
<div class="t" style="left:30.5px;top:598.39px;font-size:11px;color:#000;">1</div>
<div class="t" style="left:92.5px;top:598.39px;font-size:11px;color:#000;">ke nội</div>
<div class="t" style="left:29.5px;width:600px;text-align:center;top:598.39px;font-size:11px;color:#000;">kg</div>
<div class="t" style="right:750.5px;top:598.39px;font-size:11px;color:#000;">0,0</div>
<div class="a" style="left:27px;top:616px;width:1178px;height:26px;background:#fff;border-top:1px solid #d2e1f1;border-left:1px solid #d2e1f1"></div>
<div class="a" style="left:89px;top:616px;width:1px;height:26px;background:#d2e1f1"></div>
<div class="a" style="left:289px;top:616px;width:1px;height:26px;background:#d2e1f1"></div>
<div class="a" style="left:369px;top:616px;width:1px;height:26px;background:#d2e1f1"></div>
<div class="a" style="left:489px;top:616px;width:1px;height:26px;background:#d2e1f1"></div>
<div class="t" style="left:30.5px;top:624.39px;font-size:11px;color:#000;">6</div>
<div class="t" style="left:92.5px;top:624.39px;font-size:11px;color:#000;">Ray Đức</div>
<div class="t" style="left:29.5px;width:600px;text-align:center;top:624.39px;font-size:11px;color:#000;">m</div>
<div class="t" style="right:750.5px;top:624.39px;font-size:11px;color:#000;">0,0</div>
<div class="a" style="left:27px;top:642px;width:1178px;height:26px;background:#fff;border-top:1px solid #d2e1f1;border-left:1px solid #d2e1f1"></div>
<div class="a" style="left:89px;top:642px;width:1px;height:26px;background:#d2e1f1"></div>
<div class="a" style="left:289px;top:642px;width:1px;height:26px;background:#d2e1f1"></div>
<div class="a" style="left:369px;top:642px;width:1px;height:26px;background:#d2e1f1"></div>
<div class="a" style="left:489px;top:642px;width:1px;height:26px;background:#d2e1f1"></div>
<div class="t" style="left:30.5px;top:650.39px;font-size:11px;color:#000;">2</div>
<div class="t" style="left:92.5px;top:650.39px;font-size:11px;color:#000;">ray nội</div>
<div class="t" style="left:29.5px;width:600px;text-align:center;top:650.39px;font-size:11px;color:#000;">kg</div>
<div class="t" style="right:750.5px;top:650.39px;font-size:11px;color:#000;">0,0</div>
<div class="a" style="left:27px;top:668px;width:1178px;height:26px;background:#fff;border-top:1px solid #d2e1f1;border-left:1px solid #d2e1f1"></div>
<div class="a" style="left:89px;top:668px;width:1px;height:26px;background:#d2e1f1"></div>
<div class="a" style="left:289px;top:668px;width:1px;height:26px;background:#d2e1f1"></div>
<div class="a" style="left:369px;top:668px;width:1px;height:26px;background:#d2e1f1"></div>
<div class="a" style="left:489px;top:668px;width:1px;height:26px;background:#d2e1f1"></div>
<div class="t" style="left:30.5px;top:676.39px;font-size:11px;color:#000;">3</div>
<div class="t" style="left:92.5px;top:676.39px;font-size:11px;color:#000;">Ray treo Trắng mờ</div>
<div class="t" style="left:29.5px;width:600px;text-align:center;top:676.39px;font-size:11px;color:#000;">kg</div>
<div class="t" style="right:750.5px;top:676.39px;font-size:11px;color:#000;">0,0</div>
<div class="a" style="left:27px;top:694px;width:1178px;height:26px;background:#fff;border-top:1px solid #d2e1f1;border-left:1px solid #d2e1f1"></div>
<div class="a" style="left:89px;top:694px;width:1px;height:26px;background:#d2e1f1"></div>
<div class="a" style="left:289px;top:694px;width:1px;height:26px;background:#d2e1f1"></div>
<div class="a" style="left:369px;top:694px;width:1px;height:26px;background:#d2e1f1"></div>
<div class="a" style="left:489px;top:694px;width:1px;height:26px;background:#d2e1f1"></div>
<div class="t" style="left:30.5px;top:702.39px;font-size:11px;color:#000;">4</div>
<div class="t" style="left:92.5px;top:702.39px;font-size:11px;color:#000;">vênh hộp ( sóng, tăm)</div>
<div class="t" style="left:29.5px;width:600px;text-align:center;top:702.39px;font-size:11px;color:#000;">lá</div>
<div class="t" style="right:750.5px;top:702.39px;font-size:11px;color:#000;">0,0</div>
<div class="a" style="left:10px;top:721px;width:1195px;height:19px;background:#e6edf8"></div>
<div class="a" style="left:10px;top:720px;width:1195px;height:1px;background:#d2e1f1"></div>
<svg class="a" style="left:15px;top:725px" width="9" height="9" viewBox="0 0 9 9"><rect x="0.5" y="0.5" width="8" height="8" rx="2" fill="#eef1f6" stroke="#7d8aa0"/><rect x="2" y="4" width="5" height="1.2" fill="#4a5670"/></svg>
<div class="t" style="left:30.5px;top:725.69px;font-size:11px;color:#00006e;font-weight:bold;letter-spacing:0.450px;">Nhóm: NH</div>
<div class="a" style="left:27px;top:740px;width:1178px;height:26px;background:#fff;border-top:1px solid #d2e1f1;border-left:1px solid #d2e1f1"></div>
<div class="a" style="left:89px;top:740px;width:1px;height:26px;background:#d2e1f1"></div>
<div class="a" style="left:289px;top:740px;width:1px;height:26px;background:#d2e1f1"></div>
<div class="a" style="left:369px;top:740px;width:1px;height:26px;background:#d2e1f1"></div>
<div class="a" style="left:489px;top:740px;width:1px;height:26px;background:#d2e1f1"></div>
<div class="t" style="left:30.5px;top:748.39px;font-size:11px;color:#000;">94</div>
<div class="t" style="left:92.5px;top:748.39px;font-size:11px;color:#000;">TS Nam hai</div>
<div class="t" style="right:750.5px;top:748.39px;font-size:11px;color:#000;">0,0</div>
<div class="a" style="left:10px;top:767px;width:1195px;height:19px;background:#e6edf8"></div>
<div class="a" style="left:10px;top:766px;width:1195px;height:1px;background:#d2e1f1"></div>
<svg class="a" style="left:15px;top:771px" width="9" height="9" viewBox="0 0 9 9"><rect x="0.5" y="0.5" width="8" height="8" rx="2" fill="#eef1f6" stroke="#7d8aa0"/><rect x="2" y="4" width="5" height="1.2" fill="#4a5670"/></svg>
<div class="t" style="left:30.5px;top:771.69px;font-size:11px;color:#00006e;font-weight:bold;letter-spacing:0.450px;">Nhóm: TKuang</div>
<div class="a" style="left:27px;top:786px;width:1178px;height:26px;background:#fff;border-top:1px solid #d2e1f1;border-left:1px solid #d2e1f1"></div>
<div class="a" style="left:89px;top:786px;width:1px;height:26px;background:#d2e1f1"></div>
<div class="a" style="left:289px;top:786px;width:1px;height:26px;background:#d2e1f1"></div>
<div class="a" style="left:369px;top:786px;width:1px;height:26px;background:#d2e1f1"></div>
<div class="a" style="left:489px;top:786px;width:1px;height:26px;background:#d2e1f1"></div>
<div class="t" style="left:30.5px;top:794.39px;font-size:11px;color:#000;">212</div>
<div class="t" style="left:92.5px;top:794.39px;font-size:11px;color:#000;">Ghi TungKuang</div>
<div class="t" style="left:29.5px;width:600px;text-align:center;top:794.39px;font-size:11px;color:#000;">kg</div>
<div class="t" style="right:750.5px;top:794.39px;font-size:11px;color:#000;">0,0</div>
<div class="a" style="left:27px;top:812px;width:1178px;height:5px;background:#fff;border-top:1px solid #d2e1f1;border-left:1px solid #d2e1f1"></div>
<div class="a" style="left:89px;top:812px;width:1px;height:5px;background:#d2e1f1"></div>
<div class="a" style="left:289px;top:812px;width:1px;height:5px;background:#d2e1f1"></div>
<div class="a" style="left:369px;top:812px;width:1px;height:5px;background:#d2e1f1"></div>
<div class="a" style="left:489px;top:812px;width:1px;height:5px;background:#d2e1f1"></div>
<div class="a" style="left:10px;top:817px;width:1195px;height:28px;background:linear-gradient(#f4f8fd,#dde9f8);border-top:1px solid #9fb8d6"></div>
<div class="a" style="left:10px;top:845px;width:1195px;height:17px;background:#6791cc;border:1px solid #3e6399"></div>
<div class="a" style="left:27px;top:846px;width:936px;height:15px;background:linear-gradient(#f2f5f8 0,#f2f5f8 1px,#dde3ea 1px,#d2dae4 45%,#b4c6dc 45%,#c0d0e0 92%,#e8eef4 92%)"></div>
<div class="a" style="left:963px;top:846px;width:1px;height:15px;background:#2a5a98"></div>
<div class="a" style="left:11px;top:846px;width:16px;height:15px;background:#6892cc"></div>
<svg class="a" style="left:15px;top:849px" width="7" height="9" viewBox="0 0 7 9"><path d="M6 0 L0 4.5 L6 9 Z" fill="#c8d6ea"/></svg>
<svg class="a" style="left:1195px;top:849px" width="6" height="9" viewBox="0 0 6 9"><path d="M0 0 L5.5 4.5 L0 9 Z" fill="#c8d6ea"/></svg>
<div class="a" style="left:492px;top:849px;width:1px;height:9px;background:#3a5e98"></div>
<div class="a" style="left:494px;top:849px;width:1px;height:9px;background:#3a5e98"></div>
<div class="a" style="left:496px;top:849px;width:1px;height:9px;background:#3a5e98"></div>
<div class="a" style="left:498px;top:849px;width:1px;height:9px;background:#3a5e98"></div>
<div class="a" style="left:1205px;top:146px;width:17px;height:699px;background:#6791cc;border:1px solid #3e6399"></div>
<div class="a" style="left:1206px;top:147px;width:15px;height:16px;background:#6892cc"></div>
<svg class="a" style="left:1209px;top:151px" width="9" height="6" viewBox="0 0 9 6"><path d="M0 6 L4.5 0 L9 6 Z" fill="#c8d6ea"/></svg>
<div class="a" style="left:1206px;top:163px;width:15px;height:280px;background:linear-gradient(90deg,#f0f4f8 0,#f0f4f8 1px,#d6dde6 1px,#ccd6e2 50%,#b8c8da 50%,#bccadb 92%,#e8eef4 92%);border-bottom:1px solid #e8eef4"></div>
<div class="a" style="left:1206px;top:443px;width:15px;height:1px;background:#2a5a98"></div>
<div class="a" style="left:1209px;top:300px;width:9px;height:1px;background:#3a5e98"></div>
<div class="a" style="left:1209px;top:302px;width:9px;height:1px;background:#3a5e98"></div>
<div class="a" style="left:1209px;top:304px;width:9px;height:1px;background:#3a5e98"></div>
<div class="a" style="left:1209px;top:306px;width:9px;height:1px;background:#3a5e98"></div>
<svg class="a" style="left:1209px;top:835px" width="9" height="5" viewBox="0 0 9 5"><path d="M0 0 L4.5 5 L9 0 Z" fill="#c8d6ea"/></svg>
<div class="a" style="left:1205px;top:845px;width:17px;height:17px;background:#e2eefb"></div>
<div class="a" style="left:553px;top:285px;width:340px;height:234px;background:#c2dcf4;border:1px solid #7aa0d0;border-radius:5px 5px 1px 1px"></div>
<div class="a" style="left:554px;top:286px;width:338px;height:23px;background:linear-gradient(#b8d6f2,#b0d2f0);border-radius:4px 4px 0 0;border-bottom:1px solid #7a9cc8"></div>
<svg class="a" style="left:557px;top:290px" width="16" height="15" viewBox="0 0 16 15"><circle cx="8" cy="4.5" r="4" fill="#4cb84a"/><circle cx="4.5" cy="10.5" r="4" fill="#f0c020"/><circle cx="11.5" cy="10.5" r="4" fill="#3aa0e8"/></svg>
<div class="t" style="left:577.5px;top:293.27px;font-size:11.5px;color:#2f4d80;letter-spacing:0.008px;">Thêm mới sản phẩm</div>
<svg class="a" style="left:872px;top:294px" width="11" height="9" viewBox="0 0 11 9"><path d="M0.5 0.5 H3.2 L5.5 2.9 L7.8 0.5 H10.5 L7 4.5 L10.5 8.5 H7.8 L5.5 6.1 L3.2 8.5 H0.5 L4 4.5 Z" fill="#ffffff" stroke="#3a4a70" stroke-width="1" stroke-linejoin="round"/></svg>
<div class="a" style="left:556px;top:311px;width:334px;height:204px;background:linear-gradient(#eaf4fc,#d4e4f6);border:1px solid #78a8e0;border-radius:3px"></div>
<svg class="a" style="left:631px;top:318px" width="15" height="13" viewBox="0 0 15 13"><path d="M1 7 L5 11 L14 1" stroke="#2a9a2a" stroke-width="3" fill="none"/><path d="M1.5 7 L5 10 L13.5 1.5" stroke="#5cd05c" stroke-width="1" fill="none"/></svg>
<div class="t" style="left:650px;top:320.40px;font-size:13px;color:#0000d8;letter-spacing:0.237px;text-decoration:underline;">Nhôm</div>
<div class="a" style="left:707px;top:320px;width:10px;height:10px;background:linear-gradient(#dcdcdc,#fafafa);border:1px solid #8a8a8a;border-radius:2px"></div>
<div class="t" style="left:723.5px;top:320.40px;font-size:13px;color:#e01010;letter-spacing:0.050px;text-decoration:underline;">Kính</div>
<div class="a" style="left:786px;top:320px;width:10px;height:10px;background:linear-gradient(#dcdcdc,#fafafa);border:1px solid #8a8a8a;border-radius:2px"></div>
<div class="t" style="left:802px;top:320.40px;font-size:13px;color:#1a8a1a;letter-spacing:0.062px;text-decoration:underline;">Phu Kiên</div>
<div class="t" style="left:564.5px;top:341.54px;font-size:12px;color:#1e1a84;">Nhóm</div>
<div class="a" style="left:628px;top:338px;width:257px;height:20px;background:#fff;border:1px solid #7fa4d4"></div>
<div class="a" style="left:868px;top:341px;width:15px;height:15px;background:linear-gradient(#e4eef9,#d0e0f2);border:1px solid #aac4e2"></div>
<div class="a" style="left:872.5px;top:347px;width:0;height:0;border-left:3.0px solid transparent;border-right:3.0px solid transparent;border-top:3px solid #3a4a6a"></div>
<div class="t" style="left:631px;top:342.19px;font-size:11px;color:#0a0a6a;">ĐA</div>
<div class="t" style="left:564.5px;top:367.44px;font-size:12px;color:#1e1a84;">Mã SP</div>
<div class="a" style="left:628px;top:361px;width:100px;height:20px;background:#fff;border:1px solid #7fa4d4"></div>
<div class="t" style="left:632.5px;top:365.69px;font-size:11px;color:#707070;letter-spacing:-0.210px;">Mã sản phẩm...</div>
<div class="t" style="left:735.5px;top:362.36px;font-size:18px;color:#10188a;letter-spacing:-0.005px;">Chi tiết sản phẩm</div>
<div class="t" style="left:564.5px;top:390.24px;font-size:12px;color:#1e1a84;">Diễn giải</div>
<div class="a" style="left:628px;top:384px;width:256px;height:20px;background:#fff;border:1px solid #7fa4d4"></div>
<div class="t" style="left:632.5px;top:388.69px;font-size:11px;color:#707070;letter-spacing:-0.300px;">Tên sản phẩm...</div>
<div class="t" style="left:564.5px;top:413.54px;font-size:12px;color:#1e1a84;">Độ cao</div>
<div class="a" style="left:628px;top:407px;width:101px;height:20px;background:#fff;border:1px solid #7fa4d4"></div>
<div class="t" style="right:527px;top:411.69px;font-size:11px;color:#a0a0a0;letter-spacing:-0.200px;">0,00</div>
<div class="a" style="left:712.5px;top:409.5px;width:14px;height:15px;background:linear-gradient(#e6f0fa,#d6e4f4);border:1px solid #c0d4ea"></div>
<div class="a" style="left:713.5px;top:416.5px;width:12px;height:1px;background:#c0d4ea"></div>
<svg class="a" style="left:715.5px;top:411.5px" width="8" height="4" viewBox="0 0 8 4"><path d="M0 4 L4 0 L8 4Z" fill="#a8b8cc"/></svg>
<svg class="a" style="left:715.5px;top:418.5px" width="8" height="4" viewBox="0 0 8 4"><path d="M0 0 L4 4 L8 0Z" fill="#a8b8cc"/></svg>
<div class="t" style="left:732px;top:413.84px;font-size:12px;color:#1e1a84;letter-spacing:0.066px;">Độ rộng</div>
<div class="a" style="left:780px;top:407px;width:104px;height:20px;background:#fff;border:1px solid #7fa4d4"></div>
<div class="t" style="right:373px;top:411.69px;font-size:11px;color:#a0a0a0;letter-spacing:-0.200px;">0,00</div>
<div class="a" style="left:867.5px;top:409.5px;width:14px;height:15px;background:linear-gradient(#e6f0fa,#d6e4f4);border:1px solid #c0d4ea"></div>
<div class="a" style="left:868.5px;top:416.5px;width:12px;height:1px;background:#c0d4ea"></div>
<svg class="a" style="left:870.5px;top:411.5px" width="8" height="4" viewBox="0 0 8 4"><path d="M0 4 L4 0 L8 4Z" fill="#a8b8cc"/></svg>
<svg class="a" style="left:870.5px;top:418.5px" width="8" height="4" viewBox="0 0 8 4"><path d="M0 0 L4 4 L8 0Z" fill="#a8b8cc"/></svg>
<div class="a" style="left:565px;top:431px;width:316px;height:1px;background:repeating-linear-gradient(90deg,#d83030 0,#d83030 2px,rgba(0,0,0,0) 2px,rgba(0,0,0,0) 3px)"></div>
<div class="t" style="left:564.5px;top:443.44px;font-size:12px;color:#1e1a84;">ĐVT</div>
<div class="a" style="left:628px;top:436px;width:101px;height:20px;background:#fff;border:1px solid #7fa4d4"></div>
<div class="t" style="left:378.5px;width:600px;text-align:center;top:440.69px;font-size:11px;color:#707070;letter-spacing:-0.300px;">Đơn vị tính...</div>
<div class="t" style="left:732px;top:442.84px;font-size:12px;color:#1e1a84;letter-spacing:-0.060px;">Đơn giá</div>
<div class="a" style="left:780px;top:436px;width:104px;height:20px;background:#fff;border:1px solid #7fa4d4"></div>
<div class="t" style="right:373px;top:440.77px;font-size:11.5px;color:#0a0a6a;letter-spacing:-0.200px;">0,00</div>
<div class="a" style="left:867.5px;top:438.5px;width:14px;height:15px;background:linear-gradient(#e6f0fa,#d6e4f4);border:1px solid #c0d4ea"></div>
<div class="a" style="left:868.5px;top:445.5px;width:12px;height:1px;background:#c0d4ea"></div>
<svg class="a" style="left:870.5px;top:440.5px" width="8" height="4" viewBox="0 0 8 4"><path d="M0 4 L4 0 L8 4Z" fill="#1a2a5a"/></svg>
<svg class="a" style="left:870.5px;top:447.5px" width="8" height="4" viewBox="0 0 8 4"><path d="M0 0 L4 4 L8 0Z" fill="#1a2a5a"/></svg>
<div class="t" style="left:563px;top:461.84px;font-size:12px;color:#e01010;font-style:italic;letter-spacing:0.330px;text-decoration:underline;">* Ghi chú</div>
<div class="a" style="left:628px;top:459px;width:256px;height:20px;background:#fff;border:1px solid #7fa4d4"></div>
<div class="t" style="left:632px;top:463.69px;font-size:11px;color:#707070;letter-spacing:-0.300px;">Nội dung ghi chú, bổ xung...</div>
<div class="a" style="left:628px;top:482px;width:80px;height:28px;background:#e6f2fc;border-radius:2px"></div>
<svg class="a" style="left:644px;top:487px" width="18" height="18" viewBox="0 0 18 18"><path d="M6.4 0.5 H11.4 Q11.9 0.5 11.9 1 V6.4 H17.1 Q17.6 6.4 17.6 6.9 V11.1 Q17.6 11.6 17.1 11.6 H11.9 V17.1 Q11.9 17.6 11.4 17.6 H6.4 Q5.9 17.6 5.9 17.1 V11.6 H1 Q0.5 11.6 0.5 11.1 V6.9 Q0.5 6.4 1 6.4 H5.9 V1 Q5.9 0.5 6.4 0.5 Z" fill="url(#gPlus)" stroke="#2a62c8" stroke-width="0.9"/><path d="M7.2 2 H10.6 V7.6 H16 V10.4 H10.6 V16 H7.2 V10.4 H2 V7.6 H7.2 Z" fill="none" stroke="#8cc4f8" stroke-width="0.7" opacity="0.8"/></svg>
<div class="t" style="left:666px;top:489.84px;font-size:12px;color:#5a6e8c;font-weight:bold;letter-spacing:-0.739px;">Thêm</div>
<div class="a" style="left:712px;top:482px;width:90px;height:29px;background:linear-gradient(#dcebfa,#c5daf2);border:1px solid #9dbbe0;border-radius:3px"></div>
<svg class="a" style="left:731px;top:487px" width="18" height="18" viewBox="0 0 18 18"><rect x="0.5" y="1.5" width="16" height="16" rx="1.5" fill="#3a64a8" stroke="#1e3c70"/><rect x="3" y="2.5" width="11" height="7" fill="#fff"/><rect x="3" y="2.5" width="11" height="2" fill="#e03030"/><rect x="5" y="11.5" width="7" height="5" fill="#c8d0dc"/><path d="M8 9 L16 1" stroke="#e8a020" stroke-width="2"/></svg>
<div class="t" style="left:752px;top:489.84px;font-size:12px;color:#1a2a6e;font-weight:bold;letter-spacing:-0.381px;">Ghi lại</div>
<div class="a" style="left:752.5px;top:501.5px;width:8px;height:1px;background:#1a2a6e"></div>
<div class="a" style="left:805px;top:482px;width:79px;height:29px;background:linear-gradient(#dcebfa,#c5daf2);border:1px solid #9dbbe0;border-radius:3px"></div>
<svg class="a" style="left:822px;top:487px" width="18" height="18" viewBox="0 0 18 18"><g transform="scale(1.043)"><rect x="0.4" y="0.4" width="15.8" height="15.8" rx="0.8" fill="#fff" stroke="#7a7a7a" stroke-width="1"/><rect x="1.8" y="1.8" width="12.8" height="12.8" fill="url(#gRed)"/><path d="M5 5 L11.6 11.6 M11.6 5 L5 11.6" stroke="#fff" stroke-width="2.6"/></g></svg>
<div class="t" style="left:842.3px;top:489.84px;font-size:12px;color:#1a2a6e;font-weight:bold;letter-spacing:-0.652px;">Đóng</div>
<div class="a" style="left:4px;top:869px;width:1227px;height:1px;background:#86b0e0"></div>
<div class="a" style="left:4px;top:870px;width:1227px;height:1px;background:#d8e8f8"></div>
<div class="a" style="left:4px;top:871px;width:1227px;height:28px;background:linear-gradient(#c8def4,#c2d9f2);border-top:1px solid #6e9cd2;border-left:1px solid #8eb3e0;border-right:1px solid #7ea8dc;border-bottom:2px solid #6e9cd2"></div>
<div class="t" style="left:8px;top:876.15px;font-size:14px;color:#2f4a80;letter-spacing:-0.083px;">ıàng</div>
<svg class="a" style="left:39px;top:875px" width="12" height="12" viewBox="0 0 12 12"><circle cx="6" cy="6.7000000000000455" r="5.6" fill="#c2c2c2"/><path d="M3.7 4.400000000000046 L8.3 9.000000000000046 M8.3 4.400000000000046 L3.7 9.000000000000046" stroke="#fff" stroke-width="1.7"/></svg>
<svg class="a" style="left:36px;top:871px" width="40" height="26" viewBox="0 0 40 26"><rect x="18.4" y="3.9" width="15.2" height="14.7" rx="0.6" fill="#f4f4f4" stroke="#8a9098" stroke-width="0.8"/><rect x="18.8" y="4.2" width="14.4" height="2.8" fill="#1a8ae0"/><path d="M35.6 9.4 Q30 7.6 27.5 12.2 L25.2 10.4 L24.4 16.6 L30.4 15.6 L28.8 14 Q30.5 11 35.6 9.4 Z" fill="#e81020"/></svg>
<div class="t" style="left:75.7px;top:876.15px;font-size:14px;color:#2f4a80;letter-spacing:-0.548px;">Nhập kho nội bộ</div>
<svg class="a" style="left:175px;top:875px" width="12" height="12" viewBox="0 0 12 12"><circle cx="6" cy="6.7000000000000455" r="5.6" fill="#c2c2c2"/><path d="M3.7 4.400000000000046 L8.3 9.000000000000046 M8.3 4.400000000000046 L3.7 9.000000000000046" stroke="#fff" stroke-width="1.7"/></svg>
<svg class="a" style="left:186px;top:871px" width="26" height="26" viewBox="0 0 26 26"><rect x="10.1" y="2.2" width="5.6" height="5.6" fill="#fff" stroke="#5a6068" stroke-width="0.7"/><rect x="7.5" y="5.5" width="11" height="3" rx="1" fill="#5a5a5a"/><rect x="4.2" y="7.8" width="17.6" height="9.6" rx="1.5" fill="#a8a8a8" stroke="#6a6a6a" stroke-width="0.7"/><rect x="5" y="8.5" width="2.5" height="6" fill="#f0f0f0"/><rect x="18.5" y="8.5" width="2.5" height="6" fill="#f0f0f0"/><rect x="9" y="9" width="8" height="1.8" fill="#e8e8e8"/><rect x="12.9" y="11" width="3.3" height="1.1" fill="#3a88f0"/><rect x="7.5" y="14" width="11" height="3" fill="#333"/><rect x="10.1" y="14" width="5.6" height="5.6" fill="#fff" stroke="#5a6068" stroke-width="0.7"/><rect x="12.5" y="15" width="1.2" height="2" fill="#2a6ae0"/></svg>
<div class="t" style="left:211.6px;top:876.15px;font-size:14px;color:#2f4a80;letter-spacing:-0.556px;">Phiếu xuất kho</div>
<svg class="a" style="left:301px;top:875px" width="12" height="12" viewBox="0 0 12 12"><circle cx="6.800000000000011" cy="6.7000000000000455" r="5.6" fill="#c2c2c2"/><path d="M4.5000000000000115 4.400000000000046 L9.100000000000012 9.000000000000046 M9.100000000000012 4.400000000000046 L4.5000000000000115 9.000000000000046" stroke="#fff" stroke-width="1.7"/></svg>
<svg class="a" style="left:313px;top:871px" width="26" height="26" viewBox="0 0 26 26"><rect x="5.6" y="2.5" width="14.8" height="16.5" fill="#fdfdfd" stroke="#a8b0c0" stroke-width="0.6"/><path d="M8 4 L10 9 L7 12" stroke="#3a5a7a" stroke-width="1.2" fill="none"/><text x="10" y="14.6" font-family="Liberation Sans" font-weight="bold" font-size="10" fill="#111">A</text><text x="15.4" y="17.8" font-family="Liberation Sans" font-weight="bold" font-size="7" fill="#111">a</text><path d="M13 4.5 Q17 1.5 20 3.5 Q21 6.5 17.5 10" stroke="#1a9a1a" stroke-width="2.2" fill="none"/></svg>
<div class="t" style="left:338.9px;top:876.15px;font-size:14px;color:#2f4a80;letter-spacing:-0.567px;">Cập nhật giá từ nhà cung cấp</div>
<svg class="a" style="left:512px;top:875px" width="12" height="12" viewBox="0 0 12 12"><circle cx="6.2000000000000455" cy="6.7000000000000455" r="5.6" fill="#c2c2c2"/><path d="M3.9000000000000457 4.400000000000046 L8.500000000000046 9.000000000000046 M8.500000000000046 4.400000000000046 L3.9000000000000457 9.000000000000046" stroke="#fff" stroke-width="1.7"/></svg>
<svg class="a" style="left:523px;top:871px" width="26" height="26" viewBox="0 0 26 26"><path d="M6.5 3.2 L21 9.2" stroke="#3a2a00" stroke-width="3.6" stroke-linecap="round"/><path d="M6.5 3.2 L21 9.2" stroke="#e8b020" stroke-width="2.2" stroke-dasharray="1.5 1" stroke-linecap="round"/><path d="M7.5 4 L4.8 11 M8.5 4.5 L10.8 10 M19.5 9 L17 15.5 M20.5 9.5 L22 14.5" stroke="#c88a10" stroke-width="1.4"/><path d="M8.4 10 L12 15 H4.4 Z" fill="#f05a10" stroke="#5a2000" stroke-width="0.5"/><path d="M14.6 13 L18.4 18.4 H11 Z" fill="#f05a10" stroke="#5a2000" stroke-width="0.5"/></svg>
<div class="t" style="left:547.9px;top:876.15px;font-size:14px;color:#2f4a80;letter-spacing:-0.446px;">Đối chiếu nhập xuất kho</div>
<svg class="a" style="left:693px;top:875px" width="12" height="12" viewBox="0 0 12 12"><circle cx="6.100000000000023" cy="6.7000000000000455" r="5.6" fill="#c2c2c2"/><path d="M3.800000000000023 4.400000000000046 L8.400000000000023 9.000000000000046 M8.400000000000023 4.400000000000046 L3.800000000000023 9.000000000000046" stroke="#fff" stroke-width="1.7"/></svg>
<svg class="a" style="left:705px;top:871px" width="26" height="26" viewBox="0 0 26 26"><path d="M5.6 17.5 Q6 10.4 12 10.4 Q18.2 10.4 18.2 17.5 Z" fill="#222"/><path d="M10.5 10.4 L12 14.5 L13.5 10.4 Z" fill="#dff4ff"/><path d="M11.6 11 H12.4 L12.8 14 L12 14.8 L11.2 14 Z" fill="#e02828"/><circle cx="12.2" cy="6.6" r="3.4" fill="#f0a848"/><path d="M8.6 6.5 Q8.6 2.4 12.2 2.4 Q15.8 2.4 15.8 5.8 Q13 4.4 8.6 6.5 Z" fill="#333"/><path d="M5 17 Q9 14.6 12 16 Q15 14.4 18.5 16.5 L16 19.5 H7 Z" fill="#40b040"/></svg>
<div class="t" style="left:729.9px;top:876.15px;font-size:14px;color:#2f4a80;letter-spacing:-0.580px;">Theo dõi kính vỡ và tận dụng</div>
<svg class="a" style="left:901px;top:875px" width="12" height="12" viewBox="0 0 12 12"><circle cx="6.399999999999977" cy="6.7000000000000455" r="5.6" fill="#c2c2c2"/><path d="M4.099999999999977 4.400000000000046 L8.699999999999978 9.000000000000046 M8.699999999999978 4.400000000000046 L4.099999999999977 9.000000000000046" stroke="#fff" stroke-width="1.7"/></svg>
<svg class="a" style="left:912px;top:871px" width="26" height="26" viewBox="0 0 26 26"><path d="M7.2 2.5 Q11 3.5 15 2.5 L13.5 6.2 H9 Z" fill="#2a6ad0"/><path d="M9 6.2 Q4.5 10 5.5 16.5 Q6 19.5 11.5 19.6 Q17.2 19.5 17.8 16.5 Q18.5 10 13.5 6.2 Z" fill="#2a70d8"/><path d="M9 6.4 H13.6 L14.6 9.5" stroke="#d8c020" stroke-width="1.2" fill="none"/><path d="M11.2 10 Q8.5 9.8 8.6 11.6 Q8.8 13 10.5 13.2 Q12.2 13.6 12 15 Q11.6 16.4 9 15.8" stroke="#fff" stroke-width="1.3" fill="none"/></svg>
<div class="t" style="left:937.2px;top:876.15px;font-size:14px;color:#2f4a80;letter-spacing:-0.793px;">Giảm trừ kính vỡ</div>
<svg class="a" style="left:1036px;top:875px" width="12" height="12" viewBox="0 0 12 12"><circle cx="6.5" cy="6.7000000000000455" r="5.6" fill="#c2c2c2"/><path d="M4.2 4.400000000000046 L8.8 9.000000000000046 M8.8 4.400000000000046 L4.2 9.000000000000046" stroke="#fff" stroke-width="1.7"/></svg>
<svg class="a" style="left:1048px;top:871px" width="26" height="26" viewBox="0 0 26 26"><path d="M5.2 7.3 L16.4 3.2 L20.8 14.4 L9.5 18.8 Z" fill="#e01818" stroke="#a01010" stroke-width="0.6"/><path d="M6.3 7.8 L10.7 6.2 L12.7 11.1 L8.3 12.7 Z" fill="#fff"/><path d="M12.7 11.1 L17.7 9.1 L19.7 13.9 L14.7 15.9 Z" fill="#f0f0f4"/></svg>
<div class="t" style="left:1073.6px;top:877.84px;font-size:12px;color:#1a2a5e;font-weight:bold;letter-spacing:-0.167px;">Danh sách sản phẩm</div>
<svg class="a" style="left:1205px;top:878px" width="6" height="9" viewBox="0 0 6 9"><path d="M5.5 0 L0 4.5 L5.5 9Z" fill="#3a78d0"/></svg>
<svg class="a" style="left:1219px;top:878px" width="6" height="9" viewBox="0 0 6 9"><path d="M0 0 L5.5 4.5 L0 9Z" fill="#3a78d0"/></svg>
<div class="a" style="left:1px;top:899px;width:1234px;height:27px;background:linear-gradient(#d2e5f8,#c0d7f0 50%,#b0cbeb);border-top:1px solid #e6f2fc;border-bottom:1px solid #90b0d8"></div>
<div class="a" style="left:8px;top:903px;width:2px;height:2px;background:#4a70b0;box-shadow:1px 1px 0 #e8f2fc"></div>
<div class="a" style="left:8px;top:908px;width:2px;height:2px;background:#4a70b0;box-shadow:1px 1px 0 #e8f2fc"></div>
<div class="a" style="left:8px;top:913px;width:2px;height:2px;background:#4a70b0;box-shadow:1px 1px 0 #e8f2fc"></div>
<div class="a" style="left:8px;top:918px;width:2px;height:2px;background:#4a70b0;box-shadow:1px 1px 0 #e8f2fc"></div>
<div class="a" style="left:14px;top:901px;width:73px;height:21px;background:linear-gradient(#f6f9fc,#e6eef8);border:1px solid #8c9cb4;border-radius:2px"></div>
<div class="a" style="left:15px;top:902px;width:27px;height:19px;background:linear-gradient(#c0c9d4,#dde5ee);border-right:1px solid #8c9cb4"></div>
<div class="t" style="left:53.5px;top:906.84px;font-size:12px;color:#4a5a7a;font-weight:bold;letter-spacing:-0.664px;">TẮT</div>
<div class="a" style="left:90px;top:903px;width:1px;height:17px;background:#8fb1da"></div>
<div class="a" style="left:91px;top:903px;width:1px;height:17px;background:#e4f0fb"></div>
<svg class="a" style="left:94px;top:900px" width="24" height="24" viewBox="0 0 24 24"><rect x="2.3" y="3.1" width="12.3" height="9.3" fill="#f4f4f4" stroke="#c0c4c8" stroke-width="0.6"/><rect x="3.1" y="4.1" width="10.9" height="6.8" fill="url(#gScr)"/><rect x="4" y="5" width="1" height="1" fill="#fff"/><rect x="4" y="7" width="1" height="1" fill="#fff"/><rect x="4" y="9" width="1" height="1" fill="#fff"/><rect x="7" y="12.4" width="3" height="1.5" fill="#111"/><rect x="2.8" y="14.5" width="11.2" height="3.1" fill="#e0e0e0" stroke="#b8b8b8" stroke-width="0.5"/><rect x="15" y="6" width="4" height="3" fill="#e8e8e8" stroke="#999" stroke-width="0.4"/><path d="M15 9 H19 L18 16 L16 18.6 L15.4 16 Z" fill="#f8b810" stroke="#c07010" stroke-width="0.5"/></svg>
<div class="t" style="left:116.5px;top:906.34px;font-size:12px;color:#1e2a6a;font-weight:bold;letter-spacing:-0.857px;">.\SQLEXPRESS</div>
<div class="a" style="left:200px;top:903px;width:1px;height:17px;background:#8fb1da"></div>
<div class="a" style="left:201px;top:903px;width:1px;height:17px;background:#e4f0fb"></div>
<svg class="a" style="left:203px;top:900px" width="24" height="24" viewBox="0 0 24 24"><circle cx="14.6" cy="9.6" r="6.6" fill="#60b0f0" stroke="#505860" stroke-width="0.9"/><circle cx="10.6" cy="12.2" r="7.4" fill="#58acf0" stroke="#505860" stroke-width="0.9"/><circle cx="9.8" cy="12.8" r="5" fill="#a8dcfc" opacity="0.6"/><circle cx="10.5" cy="12.2" r="2.8" fill="#e8eef4"/><circle cx="10.5" cy="12.2" r="1.3" fill="#2a7ab0"/></svg>
<div class="t" style="left:226px;top:906.34px;font-size:12px;color:#1e2a6a;font-weight:bold;letter-spacing:-0.263px;">TanHoangGia</div>
<div class="a" style="left:307px;top:903px;width:1px;height:17px;background:#8fb1da"></div>
<div class="a" style="left:308px;top:903px;width:1px;height:17px;background:#e4f0fb"></div>
<svg class="a" style="left:310px;top:900px" width="24" height="24" viewBox="0 0 24 24"><ellipse cx="12" cy="14.6" rx="6" ry="4.4" fill="#3a9af8"/><circle cx="12" cy="7" r="4.3" fill="#48aaf8"/><ellipse cx="12" cy="5.4" rx="2.8" ry="1.8" fill="#e0f8ff" opacity="0.9"/></svg>
<div class="t" style="left:333px;top:906.34px;font-size:12px;color:#1e2a6a;font-weight:bold;letter-spacing:-0.085px;">admin - (Administrator)</div>
<div class="a" style="left:472px;top:903px;width:1px;height:17px;background:#8fb1da"></div>
<div class="a" style="left:473px;top:903px;width:1px;height:17px;background:#e4f0fb"></div>
<svg class="a" style="left:475px;top:900px" width="24" height="24" viewBox="0 0 24 24"><path d="M4 7 Q4.5 4 8 3.6" stroke="#b8f0f8" stroke-width="2.2" fill="none"/><path d="M20 7 Q19.5 4 16 3.6" stroke="#b8f0f8" stroke-width="2.2" fill="none"/><path d="M6.6 18.6 L8 15.5 H16 L17.4 18.6 Z" fill="#1a5a9a"/><circle cx="12" cy="10.8" r="6.2" fill="#fff" stroke="#2a80c0" stroke-width="2"/><path d="M8.4 11.6 L12 10.6 L10.2 8" stroke="#1a3a6a" stroke-width="1.1" fill="none"/><path d="M12 10.6 L16.6 9.4" stroke="#f08080" stroke-width="1"/></svg>
<div class="t" style="left:497.5px;top:906.34px;font-size:12px;color:#1e2a6a;font-weight:bold;letter-spacing:0.267px;">11/08/2017 1:26:18 CH</div>
<div class="a" style="left:1132px;top:903px;width:1px;height:18px;background:#8fb1da"></div>
<div class="a" style="left:1133px;top:903px;width:1px;height:18px;background:#e4f0fb"></div>
<div class="t" style="left:1137px;top:905.97px;font-size:11.5px;color:#2a1e8a;letter-spacing:0.039px;">Phiên bản 1.2.9.9</div>
<svg class="a" style="left:1222px;top:912px" width="15" height="16" viewBox="0 0 15 16"><path d="M13 0 V4 L3 14 H0 V16 H15 V0 Z" fill="#e9edf2"/></svg>
<div class="a" style="left:0px;top:926px;width:1237px;height:2px;background:#e6eaf0"></div>
</body></html>
